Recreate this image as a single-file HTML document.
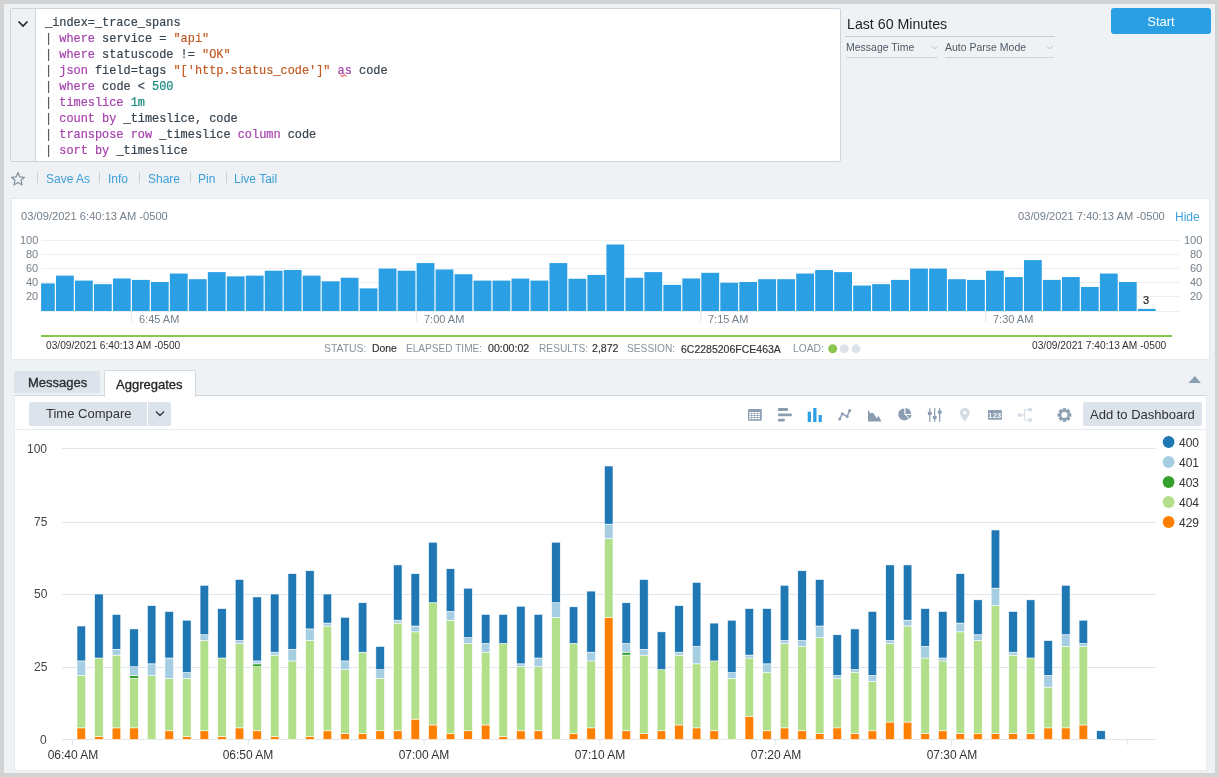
<!DOCTYPE html>
<html><head><meta charset="utf-8"><style>
html,body{margin:0;padding:0;}
body{width:1219px;height:777px;position:relative;overflow:hidden;background:#d3d3d3;font-family:'Liberation Sans', sans-serif;}
.r{position:absolute;}
.t{position:absolute;white-space:nowrap;will-change:transform;}
</style></head><body>
<div class="r" style="left:4px;top:4px;width:1211px;height:769px;background:#eff2f4;"></div>
<div class="r" style="left:10px;top:8px;width:831px;height:154px;background:#fff;border:1px solid #cbd5de;border-radius:2px;box-sizing:border-box;"></div>
<div class="r" style="left:11px;top:9px;width:24px;height:152px;background:#eff2f4;border-right:1px solid #cbd5de;border-radius:2px 0 0 2px;"></div>
<svg class="r" style="left:16px;top:18px" width="14" height="12" viewBox="0 0 14 12"><path d="M2.5 3.5 L7 8 L11.5 3.5" fill="none" stroke="#222" stroke-width="1.6"/></svg>
<div class="t" style="left:45px;top:17.88px;font-size:11.9px;line-height:11.9px;color:#36434f;font-family:'Liberation Mono', monospace;font-weight:normal;white-space:pre;-webkit-text-stroke:0.2px currentColor;">_index=_trace_spans</div>
<div class="t" style="left:45px;top:33.88px;font-size:11.9px;line-height:11.9px;color:#36434f;font-family:'Liberation Mono', monospace;font-weight:normal;white-space:pre;-webkit-text-stroke:0.2px currentColor;"><span style="color:#555">|</span> <span style="color:#a641ad">where</span> service = <span style="color:#c15a23">&quot;api&quot;</span></div>
<div class="t" style="left:45px;top:49.88px;font-size:11.9px;line-height:11.9px;color:#36434f;font-family:'Liberation Mono', monospace;font-weight:normal;white-space:pre;-webkit-text-stroke:0.2px currentColor;"><span style="color:#555">|</span> <span style="color:#a641ad">where</span> statuscode != <span style="color:#c15a23">&quot;OK&quot;</span></div>
<div class="t" style="left:45px;top:65.88px;font-size:11.9px;line-height:11.9px;color:#36434f;font-family:'Liberation Mono', monospace;font-weight:normal;white-space:pre;-webkit-text-stroke:0.2px currentColor;"><span style="color:#555">|</span> <span style="color:#a641ad">json</span> field=tags <span style="color:#c15a23">&quot;[&#39;http.status_code&#39;]&quot;</span> <span style="color:#a641ad">as</span> code</div>
<div class="t" style="left:45px;top:81.88px;font-size:11.9px;line-height:11.9px;color:#36434f;font-family:'Liberation Mono', monospace;font-weight:normal;white-space:pre;-webkit-text-stroke:0.2px currentColor;"><span style="color:#555">|</span> <span style="color:#a641ad">where</span> code &lt; <span style="color:#19897c">500</span></div>
<div class="t" style="left:45px;top:97.88px;font-size:11.9px;line-height:11.9px;color:#36434f;font-family:'Liberation Mono', monospace;font-weight:normal;white-space:pre;-webkit-text-stroke:0.2px currentColor;"><span style="color:#555">|</span> <span style="color:#a641ad">timeslice</span> <span style="color:#19897c">1m</span></div>
<div class="t" style="left:45px;top:113.88px;font-size:11.9px;line-height:11.9px;color:#36434f;font-family:'Liberation Mono', monospace;font-weight:normal;white-space:pre;-webkit-text-stroke:0.2px currentColor;"><span style="color:#555">|</span> <span style="color:#a641ad">count</span> <span style="color:#a641ad">by</span> _timeslice, code</div>
<div class="t" style="left:45px;top:129.88px;font-size:11.9px;line-height:11.9px;color:#36434f;font-family:'Liberation Mono', monospace;font-weight:normal;white-space:pre;-webkit-text-stroke:0.2px currentColor;"><span style="color:#555">|</span> <span style="color:#a641ad">transpose</span> <span style="color:#a641ad">row</span> _timeslice <span style="color:#a641ad">column</span> code</div>
<div class="t" style="left:45px;top:145.88px;font-size:11.9px;line-height:11.9px;color:#36434f;font-family:'Liberation Mono', monospace;font-weight:normal;white-space:pre;-webkit-text-stroke:0.2px currentColor;"><span style="color:#555">|</span> <span style="color:#a641ad">sort</span> <span style="color:#a641ad">by</span> _timeslice</div>
<svg class="r" style="left:0;top:0" width="400" height="100" viewBox="0 0 400 100"><polyline points="340.3,74.6 342.3,76.6 344.3,74.6 346.6,76.6" fill="none" stroke="#ff6a6a" stroke-width="1.1"/></svg>
<svg class="r" style="left:10px;top:171px" width="16" height="16" viewBox="0 0 16 16"><path d="M8 1.6 L9.9 5.9 L14.5 6.3 L11 9.3 L12.1 13.9 L8 11.5 L3.9 13.9 L5 9.3 L1.5 6.3 L6.1 5.9 Z" fill="none" stroke="#8592a0" stroke-width="1.2" stroke-linejoin="round"/></svg>
<div class="r" style="left:37px;top:172px;width:1px;height:11px;background:#c9d1d9;"></div>
<div class="r" style="left:99px;top:172px;width:1px;height:11px;background:#c9d1d9;"></div>
<div class="r" style="left:139px;top:172px;width:1px;height:11px;background:#c9d1d9;"></div>
<div class="r" style="left:190px;top:172px;width:1px;height:11px;background:#c9d1d9;"></div>
<div class="r" style="left:226px;top:172px;width:1px;height:11px;background:#c9d1d9;"></div>
<div class="t" style="left:45.5px;top:173.44px;font-size:12px;line-height:12px;color:#3d9fdc;font-family:'Liberation Sans', sans-serif;font-weight:normal;white-space:pre;">Save As</div>
<div class="t" style="left:107.8px;top:173.44px;font-size:12px;line-height:12px;color:#3d9fdc;font-family:'Liberation Sans', sans-serif;font-weight:normal;white-space:pre;">Info</div>
<div class="t" style="left:147.7px;top:173.44px;font-size:12px;line-height:12px;color:#3d9fdc;font-family:'Liberation Sans', sans-serif;font-weight:normal;white-space:pre;">Share</div>
<div class="t" style="left:198.1px;top:173.44px;font-size:12px;line-height:12px;color:#3d9fdc;font-family:'Liberation Sans', sans-serif;font-weight:normal;white-space:pre;">Pin</div>
<div class="t" style="left:234.3px;top:173.44px;font-size:12px;line-height:12px;color:#3d9fdc;font-family:'Liberation Sans', sans-serif;font-weight:normal;white-space:pre;">Live Tail</div>
<div class="t" style="left:847px;top:17.48px;font-size:14.2px;line-height:14.2px;color:#1e1e1e;font-family:'Liberation Sans', sans-serif;font-weight:normal;">Last 60 Minutes</div>
<div class="r" style="left:845px;top:36px;width:210px;height:1px;background:#c5ced7;"></div>
<div class="t" style="left:846px;top:41.81px;font-size:10.5px;line-height:10.5px;color:#4e5a66;font-family:'Liberation Sans', sans-serif;font-weight:normal;">Message Time</div>
<div class="r" style="left:846px;top:57px;width:92px;height:1px;background:#cbd3db;"></div>
<div class="t" style="left:945px;top:41.81px;font-size:10.5px;line-height:10.5px;color:#4e5a66;font-family:'Liberation Sans', sans-serif;font-weight:normal;">Auto Parse Mode</div>
<div class="r" style="left:945px;top:57px;width:109px;height:1px;background:#cbd3db;"></div>
<svg class="r" style="left:930.5px;top:45px" width="8" height="6" viewBox="0 0 8 6"><path d="M1 1.3 L3.6 3.9 L6.2 1.3" fill="none" stroke="#a6b1bb" stroke-width="0.9"/></svg>
<svg class="r" style="left:1046px;top:45px" width="8" height="6" viewBox="0 0 8 6"><path d="M1 1.3 L3.6 3.9 L6.2 1.3" fill="none" stroke="#a6b1bb" stroke-width="0.9"/></svg>
<div class="r" style="left:1111px;top:8px;width:100px;height:26px;background:#2a9fe4;border-radius:3px;"></div>
<div class="t" style="left:861px;width:600px;text-align:center;top:15.40px;font-size:13px;line-height:13px;color:#fff;font-family:'Liberation Sans', sans-serif;font-weight:normal;">Start</div>
<div class="r" style="left:11px;top:198px;width:1199px;height:162px;background:#fff;border:1px solid #e4e9ed;box-sizing:border-box;"></div>
<div class="t" style="left:20.5px;top:210.56px;font-size:11.15px;line-height:11.15px;color:#737f8a;font-family:'Liberation Sans', sans-serif;font-weight:normal;">03/09/2021 6:40:13 AM -0500</div>
<div class="t" style="right:54px;top:210.56px;font-size:11.15px;line-height:11.15px;color:#737f8a;font-family:'Liberation Sans', sans-serif;font-weight:normal;">03/09/2021 7:40:13 AM -0500</div>
<div class="t" style="left:1175.4px;top:210.84px;font-size:12px;line-height:12px;color:#3d9fdc;font-family:'Liberation Sans', sans-serif;font-weight:normal;">Hide</div>
<svg class="r" style="left:0;top:0" width="1219" height="777" viewBox="0 0 1219 777">
<rect x="41.5" y="240" width="1138.5" height="1" fill="#edf0f3"/>
<rect x="41.5" y="254" width="1138.5" height="1" fill="#edf0f3"/>
<rect x="41.5" y="268" width="1138.5" height="1" fill="#edf0f3"/>
<rect x="41.5" y="282" width="1138.5" height="1" fill="#edf0f3"/>
<rect x="41.5" y="296" width="1138.5" height="1" fill="#edf0f3"/>
<rect x="41.5" y="311" width="1138.5" height="1" fill="#edf0f3"/>
<rect x="41.10" y="283.43" width="13.70" height="27.57" fill="#2a9fe4"/>
<rect x="56.00" y="275.65" width="17.80" height="35.35" fill="#2a9fe4"/>
<rect x="74.98" y="280.60" width="17.80" height="30.40" fill="#2a9fe4"/>
<rect x="93.96" y="284.13" width="17.80" height="26.87" fill="#2a9fe4"/>
<rect x="112.94" y="278.48" width="17.80" height="32.52" fill="#2a9fe4"/>
<rect x="131.92" y="279.89" width="17.80" height="31.11" fill="#2a9fe4"/>
<rect x="150.90" y="282.01" width="17.80" height="28.99" fill="#2a9fe4"/>
<rect x="169.88" y="273.53" width="17.80" height="37.47" fill="#2a9fe4"/>
<rect x="188.86" y="279.19" width="17.80" height="31.81" fill="#2a9fe4"/>
<rect x="207.84" y="272.12" width="17.80" height="38.88" fill="#2a9fe4"/>
<rect x="226.82" y="276.36" width="17.80" height="34.64" fill="#2a9fe4"/>
<rect x="245.80" y="275.65" width="17.80" height="35.35" fill="#2a9fe4"/>
<rect x="264.78" y="270.70" width="17.80" height="40.30" fill="#2a9fe4"/>
<rect x="283.76" y="269.99" width="17.80" height="41.01" fill="#2a9fe4"/>
<rect x="302.74" y="275.65" width="17.80" height="35.35" fill="#2a9fe4"/>
<rect x="321.72" y="281.31" width="17.80" height="29.69" fill="#2a9fe4"/>
<rect x="340.70" y="277.77" width="17.80" height="33.23" fill="#2a9fe4"/>
<rect x="359.68" y="288.38" width="17.80" height="22.62" fill="#2a9fe4"/>
<rect x="378.66" y="268.58" width="17.80" height="42.42" fill="#2a9fe4"/>
<rect x="397.64" y="270.70" width="17.80" height="40.30" fill="#2a9fe4"/>
<rect x="416.62" y="263.07" width="17.80" height="47.93" fill="#2a9fe4"/>
<rect x="435.60" y="269.50" width="17.80" height="41.50" fill="#2a9fe4"/>
<rect x="454.58" y="274.24" width="17.80" height="36.76" fill="#2a9fe4"/>
<rect x="473.56" y="280.60" width="17.80" height="30.40" fill="#2a9fe4"/>
<rect x="492.54" y="280.60" width="17.80" height="30.40" fill="#2a9fe4"/>
<rect x="511.52" y="278.62" width="17.80" height="32.38" fill="#2a9fe4"/>
<rect x="530.50" y="280.60" width="17.80" height="30.40" fill="#2a9fe4"/>
<rect x="549.48" y="263.07" width="17.80" height="47.93" fill="#2a9fe4"/>
<rect x="568.46" y="278.76" width="17.80" height="32.24" fill="#2a9fe4"/>
<rect x="587.44" y="274.94" width="17.80" height="36.06" fill="#2a9fe4"/>
<rect x="606.42" y="244.54" width="17.80" height="66.46" fill="#2a9fe4"/>
<rect x="625.40" y="277.77" width="17.80" height="33.23" fill="#2a9fe4"/>
<rect x="644.38" y="272.12" width="17.80" height="38.88" fill="#2a9fe4"/>
<rect x="663.36" y="284.84" width="17.80" height="26.16" fill="#2a9fe4"/>
<rect x="682.34" y="278.48" width="17.80" height="32.52" fill="#2a9fe4"/>
<rect x="701.32" y="272.82" width="17.80" height="38.18" fill="#2a9fe4"/>
<rect x="720.30" y="282.72" width="17.80" height="28.28" fill="#2a9fe4"/>
<rect x="739.28" y="282.01" width="17.80" height="28.99" fill="#2a9fe4"/>
<rect x="758.26" y="279.19" width="17.80" height="31.81" fill="#2a9fe4"/>
<rect x="777.24" y="279.19" width="17.80" height="31.81" fill="#2a9fe4"/>
<rect x="796.22" y="273.53" width="17.80" height="37.47" fill="#2a9fe4"/>
<rect x="815.20" y="269.99" width="17.80" height="41.01" fill="#2a9fe4"/>
<rect x="834.18" y="272.12" width="17.80" height="38.88" fill="#2a9fe4"/>
<rect x="853.16" y="285.55" width="17.80" height="25.45" fill="#2a9fe4"/>
<rect x="872.14" y="284.13" width="17.80" height="26.87" fill="#2a9fe4"/>
<rect x="891.12" y="279.89" width="17.80" height="31.11" fill="#2a9fe4"/>
<rect x="910.10" y="268.58" width="17.80" height="42.42" fill="#2a9fe4"/>
<rect x="929.08" y="268.58" width="17.80" height="42.42" fill="#2a9fe4"/>
<rect x="948.06" y="279.19" width="17.80" height="31.81" fill="#2a9fe4"/>
<rect x="967.04" y="279.89" width="17.80" height="31.11" fill="#2a9fe4"/>
<rect x="986.02" y="270.70" width="17.80" height="40.30" fill="#2a9fe4"/>
<rect x="1005.00" y="277.06" width="17.80" height="33.94" fill="#2a9fe4"/>
<rect x="1023.98" y="260.10" width="17.80" height="50.90" fill="#2a9fe4"/>
<rect x="1042.96" y="279.89" width="17.80" height="31.11" fill="#2a9fe4"/>
<rect x="1061.94" y="277.06" width="17.80" height="33.94" fill="#2a9fe4"/>
<rect x="1080.92" y="286.96" width="17.80" height="24.04" fill="#2a9fe4"/>
<rect x="1099.90" y="273.53" width="17.80" height="37.47" fill="#2a9fe4"/>
<rect x="1118.88" y="282.01" width="17.80" height="28.99" fill="#2a9fe4"/>
<rect x="1137.86" y="308.88" width="17.80" height="2.12" fill="#2a9fe4"/>
<rect x="130.80" y="311" width="1" height="11" fill="#e3e8ec"/>
<rect x="415.90" y="311" width="1" height="11" fill="#e3e8ec"/>
<rect x="700.30" y="311" width="1" height="11" fill="#e3e8ec"/>
<rect x="985.20" y="311" width="1" height="11" fill="#e3e8ec"/>
<rect x="41" y="335" width="1131" height="2" fill="#84c54a"/>
<circle cx="832.7" cy="348.8" r="4.5" fill="#8cc64f"/>
<circle cx="844.2" cy="348.8" r="4.5" fill="#dde3e8"/>
<circle cx="856" cy="348.8" r="4.5" fill="#dde3e8"/>
</svg>
<div class="t" style="right:1180.7px;top:291.45px;font-size:11px;line-height:11px;color:#737f8a;font-family:'Liberation Sans', sans-serif;font-weight:normal;">20</div>
<div class="t" style="right:17px;top:291.45px;font-size:11px;line-height:11px;color:#737f8a;font-family:'Liberation Sans', sans-serif;font-weight:normal;">20</div>
<div class="t" style="right:1180.7px;top:277.31px;font-size:11px;line-height:11px;color:#737f8a;font-family:'Liberation Sans', sans-serif;font-weight:normal;">40</div>
<div class="t" style="right:17px;top:277.31px;font-size:11px;line-height:11px;color:#737f8a;font-family:'Liberation Sans', sans-serif;font-weight:normal;">40</div>
<div class="t" style="right:1180.7px;top:263.17px;font-size:11px;line-height:11px;color:#737f8a;font-family:'Liberation Sans', sans-serif;font-weight:normal;">60</div>
<div class="t" style="right:17px;top:263.17px;font-size:11px;line-height:11px;color:#737f8a;font-family:'Liberation Sans', sans-serif;font-weight:normal;">60</div>
<div class="t" style="right:1180.7px;top:249.03px;font-size:11px;line-height:11px;color:#737f8a;font-family:'Liberation Sans', sans-serif;font-weight:normal;">80</div>
<div class="t" style="right:17px;top:249.03px;font-size:11px;line-height:11px;color:#737f8a;font-family:'Liberation Sans', sans-serif;font-weight:normal;">80</div>
<div class="t" style="right:1180.7px;top:234.89px;font-size:11px;line-height:11px;color:#737f8a;font-family:'Liberation Sans', sans-serif;font-weight:normal;">100</div>
<div class="t" style="right:17px;top:234.89px;font-size:11px;line-height:11px;color:#737f8a;font-family:'Liberation Sans', sans-serif;font-weight:normal;">100</div>
<div class="t" style="left:846.4000000000001px;width:600px;text-align:center;top:294.69px;font-size:11px;line-height:11px;color:#222;font-family:'Liberation Sans', sans-serif;font-weight:normal;-webkit-text-stroke:0.2px #222;">3</div>
<div class="t" style="left:138.5px;top:313.69px;font-size:11px;line-height:11px;color:#737f8a;font-family:'Liberation Sans', sans-serif;font-weight:normal;">6:45 AM</div>
<div class="t" style="left:423.59999999999997px;top:313.69px;font-size:11px;line-height:11px;color:#737f8a;font-family:'Liberation Sans', sans-serif;font-weight:normal;">7:00 AM</div>
<div class="t" style="left:708.0px;top:313.69px;font-size:11px;line-height:11px;color:#737f8a;font-family:'Liberation Sans', sans-serif;font-weight:normal;">7:15 AM</div>
<div class="t" style="left:992.9000000000001px;top:313.69px;font-size:11px;line-height:11px;color:#737f8a;font-family:'Liberation Sans', sans-serif;font-weight:normal;">7:30 AM</div>
<div class="t" style="left:46.3px;top:341.37px;font-size:10.2px;line-height:10.2px;color:#333;font-family:'Liberation Sans', sans-serif;font-weight:normal;">03/09/2021 6:40:13 AM -0500</div>
<div class="t" style="right:52.5px;top:341.37px;font-size:10.2px;line-height:10.2px;color:#333;font-family:'Liberation Sans', sans-serif;font-weight:normal;">03/09/2021 7:40:13 AM -0500</div>
<div class="t" style="left:323.5px;top:343.60px;font-size:10.4px;line-height:10.4px;color:#87919a;font-family:'Liberation Sans', sans-serif;font-weight:normal;white-space:pre;">STATUS:</div>
<div class="t" style="left:371.5px;top:343.60px;font-size:10.4px;line-height:10.4px;color:#333;font-family:'Liberation Sans', sans-serif;font-weight:normal;white-space:pre;-webkit-text-stroke:0.15px #333;">Done</div>
<div class="t" style="left:406px;top:343.85px;font-size:10.1px;line-height:10.1px;color:#87919a;font-family:'Liberation Sans', sans-serif;font-weight:normal;white-space:pre;">ELAPSED TIME:</div>
<div class="t" style="left:488.4px;top:343.43px;font-size:10.6px;line-height:10.6px;color:#333;font-family:'Liberation Sans', sans-serif;font-weight:normal;white-space:pre;-webkit-text-stroke:0.15px #333;">00:00:02</div>
<div class="t" style="left:538.8px;top:343.77px;font-size:10.2px;line-height:10.2px;color:#87919a;font-family:'Liberation Sans', sans-serif;font-weight:normal;white-space:pre;">RESULTS:</div>
<div class="t" style="left:592px;top:343.43px;font-size:10.6px;line-height:10.6px;color:#333;font-family:'Liberation Sans', sans-serif;font-weight:normal;white-space:pre;-webkit-text-stroke:0.15px #333;">2,872</div>
<div class="t" style="left:627.4px;top:343.77px;font-size:10.2px;line-height:10.2px;color:#87919a;font-family:'Liberation Sans', sans-serif;font-weight:normal;white-space:pre;">SESSION:</div>
<div class="t" style="left:680.8px;top:343.51px;font-size:10.5px;line-height:10.5px;color:#333;font-family:'Liberation Sans', sans-serif;font-weight:normal;white-space:pre;-webkit-text-stroke:0.15px #333;">6C2285206FCE463A</div>
<div class="t" style="left:792.8px;top:343.68px;font-size:10.3px;line-height:10.3px;color:#87919a;font-family:'Liberation Sans', sans-serif;font-weight:normal;white-space:pre;">LOAD:</div>
<div class="r" style="left:14px;top:371px;width:86px;height:22px;background:#dde3ea;border-radius:2px 2px 0 0;"></div>
<div class="t" style="left:27.6px;top:375.90px;font-size:13px;line-height:13px;color:#2b2f33;font-family:'Liberation Sans', sans-serif;font-weight:normal;-webkit-text-stroke:0.35px #2b2f33;">Messages</div>
<div class="r" style="left:14px;top:395px;width:1193px;height:1px;background:#d2d7db;"></div>
<div class="r" style="left:14px;top:396px;width:1193px;height:375px;background:#fff;border:1px solid #e8ecef;border-top:none;box-sizing:border-box;"></div>
<div class="r" style="left:104px;top:370px;width:92px;height:27px;background:#fff;border:1px solid #d3dae0;border-bottom:none;border-radius:2px 2px 0 0;box-sizing:border-box;"></div>
<div class="t" style="left:115.9px;top:377.60px;font-size:13px;line-height:13px;color:#222;font-family:'Liberation Sans', sans-serif;font-weight:normal;-webkit-text-stroke:0.3px #222;">Aggregates</div>
<svg class="r" style="left:1186px;top:374px" width="17" height="11" viewBox="0 0 17 11"><path d="M2.5 9 L8.8 2 L15 9 Z" fill="#8a9eb0"/></svg>
<div class="r" style="left:29px;top:402px;width:118px;height:24px;background:#dde3ea;border-radius:2px 0 0 2px;"></div>
<div class="r" style="left:148px;top:402px;width:23px;height:24px;background:#dde3ea;border-radius:0 2px 2px 0;"></div>
<div class="t" style="left:46.2px;top:407.00px;font-size:13px;line-height:13px;color:#333;font-family:'Liberation Sans', sans-serif;font-weight:normal;">Time Compare</div>
<svg class="r" style="left:154px;top:409px" width="12" height="9" viewBox="0 0 12 9"><path d="M2 2.5 L6 6.5 L10 2.5" fill="none" stroke="#2f3942" stroke-width="1.4"/></svg>
<div class="r" style="left:15px;top:429px;width:1191px;height:1px;background:#e6ebef;"></div>
<div class="r" style="left:1083px;top:402px;width:119px;height:24px;background:#dde3ea;border-radius:2px;"></div>
<div class="t" style="left:1090px;top:407.70px;font-size:13px;line-height:13px;color:#333;font-family:'Liberation Sans', sans-serif;font-weight:normal;">Add to Dashboard</div>
<svg class="r" style="left:0;top:0" width="1219" height="777" viewBox="0 0 1219 777">
<rect x="748" y="409.1" width="13.8" height="11.7" rx="1" fill="#8a9db1"/>
<rect x="749.1" y="412.0" width="2.4" height="1.3" fill="#fff"/>
<rect x="752.0" y="412.0" width="2.4" height="1.3" fill="#fff"/>
<rect x="754.8" y="412.0" width="2.4" height="1.3" fill="#fff"/>
<rect x="757.7" y="412.0" width="2.4" height="1.3" fill="#fff"/>
<rect x="749.1" y="413.9" width="2.4" height="1.3" fill="#fff"/>
<rect x="752.0" y="413.9" width="2.4" height="1.3" fill="#fff"/>
<rect x="754.8" y="413.9" width="2.4" height="1.3" fill="#fff"/>
<rect x="757.7" y="413.9" width="2.4" height="1.3" fill="#fff"/>
<rect x="749.1" y="415.9" width="2.4" height="1.3" fill="#fff"/>
<rect x="752.0" y="415.9" width="2.4" height="1.3" fill="#fff"/>
<rect x="754.8" y="415.9" width="2.4" height="1.3" fill="#fff"/>
<rect x="757.7" y="415.9" width="2.4" height="1.3" fill="#fff"/>
<rect x="749.1" y="417.9" width="2.4" height="1.3" fill="#fff"/>
<rect x="752.0" y="417.9" width="2.4" height="1.3" fill="#fff"/>
<rect x="754.8" y="417.9" width="2.4" height="1.3" fill="#fff"/>
<rect x="757.7" y="417.9" width="2.4" height="1.3" fill="#fff"/>
<rect x="778" y="408.1" width="10" height="2.9" rx="0.8" fill="#8a9db1"/>
<rect x="778" y="413.4" width="13.8" height="2.9" rx="0.8" fill="#8a9db1"/>
<rect x="778" y="418.7" width="6.8" height="2.9" rx="0.8" fill="#8a9db1"/>
<rect x="807.7" y="411.7" width="3.3" height="10.3" fill="#2d9fe3"/>
<rect x="813.2" y="408" width="3.3" height="14" fill="#2d9fe3"/>
<rect x="818.6" y="415" width="3.2" height="7" fill="#2d9fe3"/>
<polyline points="839.7,419.0 842.2,413.8 847.1,416.6 849.7,410.6" fill="none" stroke="#8a9db1" stroke-width="1.4"/>
<circle cx="839.7" cy="419.0" r="1.5" fill="#8a9db1"/>
<circle cx="842.2" cy="413.8" r="1.5" fill="#8a9db1"/>
<circle cx="847.1" cy="416.6" r="1.5" fill="#8a9db1"/>
<circle cx="849.7" cy="410.6" r="1.5" fill="#8a9db1"/>
<path d="M868 409.5 L870.4 413.4 L871.6 412.7 L873.2 413 L876.7 418.3 L878.5 415.9 L881.6 421.6 L868 421.6 Z" fill="#8a9db1"/>
<path d="M904.3 414.3 L904.3 408.4 A6 6 0 1 0 908.7 418.5 Z" fill="#8a9db1"/>
<path d="M905.5 413.9 L905.5 408.1 A5.6 5.6 0 0 1 911.1 413.9 Z" fill="#8a9db1"/>
<path d="M906.6 415.1 L911.6 415.1 A5.8 5.8 0 0 1 909.5 418.6 Z" fill="#8a9db1"/>
<rect x="929.1999999999999" y="408.1" width="1.2" height="13.8" fill="#8a9db1"/>
<rect x="927.9" y="411.7" width="3.8" height="3.2" rx="0.5" fill="#8a9db1"/>
<rect x="934.1" y="408.1" width="1.2" height="13.8" fill="#8a9db1"/>
<rect x="932.8000000000001" y="415.9" width="3.8" height="3.2" rx="0.5" fill="#8a9db1"/>
<rect x="939.1" y="408.1" width="1.2" height="13.8" fill="#8a9db1"/>
<rect x="937.8000000000001" y="410.59999999999997" width="3.8" height="3.2" rx="0.5" fill="#8a9db1"/>
<path d="M964.8 407.9 A4.8 4.8 0 0 1 969.6 412.7 C969.6 415.4 966.4 418.8 964.8 421.7 C963.2 418.8 960 415.4 960 412.7 A4.8 4.8 0 0 1 964.8 407.9 Z M964.8 411 A1.7 1.7 0 1 0 964.8 414.4 A1.7 1.7 0 1 0 964.8 411 Z" fill="#d3dbe3" fill-rule="evenodd"/>
<rect x="988" y="410.1" width="13.8" height="9.6" fill="#8a9db1"/>
<text x="994.9" y="417.7" font-family="Liberation Sans" font-weight="bold" font-size="7.4" fill="#fff" text-anchor="middle" letter-spacing="0.3">123</text>
<rect x="1018" y="413.4" width="3.8" height="3.4" fill="#d3dbe3"/>
<rect x="1028.3" y="408" width="3.5" height="3.4" fill="#d3dbe3"/>
<rect x="1028.3" y="418.3" width="3.5" height="3.4" fill="#d3dbe3"/>
<path d="M1021.8 415.1 H1024.4 M1024.4 409.7 V420 M1024.4 409.7 H1028.3 M1024.4 420 H1028.3" stroke="#d3dbe3" stroke-width="1" fill="none"/>
<path d="M1069.27 413.25 L1071.18 413.39 L1071.18 416.41 L1069.27 416.55 L1069.03 417.14 L1070.28 418.60 L1068.15 420.73 L1066.69 419.48 L1066.10 419.72 L1065.96 421.63 L1062.94 421.63 L1062.80 419.72 L1062.21 419.48 L1060.75 420.73 L1058.62 418.60 L1059.87 417.14 L1059.63 416.55 L1057.72 416.41 L1057.72 413.39 L1059.63 413.25 L1059.87 412.66 L1058.62 411.20 L1060.75 409.07 L1062.21 410.32 L1062.80 410.08 L1062.94 408.17 L1065.96 408.17 L1066.10 410.08 L1066.69 410.32 L1068.15 409.07 L1070.28 411.20 L1069.03 412.66 Z M1067.65 414.90 A3.2 3.2 0 1 0 1061.25 414.90 A3.2 3.2 0 1 0 1067.65 414.90 Z" fill="#8a9db1" fill-rule="evenodd" stroke="#8a9db1" stroke-width="0.3" stroke-linejoin="round"/>
</svg>
<svg class="r" style="left:0;top:0" width="1219" height="777" viewBox="0 0 1219 777">
<rect x="62" y="448" width="1094" height="1" fill="#e0e6eb"/>
<rect x="62" y="522" width="1094" height="1" fill="#e0e6eb"/>
<rect x="62" y="594" width="1094" height="1" fill="#e0e6eb"/>
<rect x="62" y="667" width="1094" height="1" fill="#e0e6eb"/>
<rect x="62" y="739" width="1094" height="1" fill="#e0e6eb"/>
<rect x="72.00" y="739" width="1" height="6" fill="#dfe6ec"/>
<rect x="247.80" y="739" width="1" height="6" fill="#dfe6ec"/>
<rect x="423.60" y="739" width="1" height="6" fill="#dfe6ec"/>
<rect x="599.40" y="739" width="1" height="6" fill="#dfe6ec"/>
<rect x="775.20" y="739" width="1" height="6" fill="#dfe6ec"/>
<rect x="951.00" y="739" width="1" height="6" fill="#dfe6ec"/>
<rect x="1126.80" y="739" width="1" height="6" fill="#dfe6ec"/>
<rect x="77.00" y="727.86" width="8.6" height="11.64" fill="#ff7f00" stroke="#fff" stroke-width="0.6"/>
<rect x="77.00" y="675.48" width="8.6" height="52.38" fill="#b2df8a" stroke="#fff" stroke-width="0.6"/>
<rect x="77.00" y="660.93" width="8.6" height="14.55" fill="#a6cee3" stroke="#fff" stroke-width="0.6"/>
<rect x="77.00" y="626.01" width="8.6" height="34.92" fill="#1f78b4" stroke="#fff" stroke-width="0.6"/>
<rect x="94.58" y="736.59" width="8.6" height="2.91" fill="#ff7f00" stroke="#fff" stroke-width="0.6"/>
<rect x="94.58" y="658.02" width="8.6" height="78.57" fill="#b2df8a" stroke="#fff" stroke-width="0.6"/>
<rect x="94.58" y="594.00" width="8.6" height="64.02" fill="#1f78b4" stroke="#fff" stroke-width="0.6"/>
<rect x="112.16" y="727.86" width="8.6" height="11.64" fill="#ff7f00" stroke="#fff" stroke-width="0.6"/>
<rect x="112.16" y="655.11" width="8.6" height="72.75" fill="#b2df8a" stroke="#fff" stroke-width="0.6"/>
<rect x="112.16" y="649.29" width="8.6" height="5.82" fill="#a6cee3" stroke="#fff" stroke-width="0.6"/>
<rect x="112.16" y="614.37" width="8.6" height="34.92" fill="#1f78b4" stroke="#fff" stroke-width="0.6"/>
<rect x="129.74" y="727.86" width="8.6" height="11.64" fill="#ff7f00" stroke="#fff" stroke-width="0.6"/>
<rect x="129.74" y="678.39" width="8.6" height="49.47" fill="#b2df8a" stroke="#fff" stroke-width="0.6"/>
<rect x="129.74" y="675.48" width="8.6" height="2.91" fill="#33a02c" stroke="#fff" stroke-width="0.6"/>
<rect x="129.74" y="666.75" width="8.6" height="8.73" fill="#a6cee3" stroke="#fff" stroke-width="0.6"/>
<rect x="129.74" y="628.92" width="8.6" height="37.83" fill="#1f78b4" stroke="#fff" stroke-width="0.6"/>
<rect x="147.32" y="675.48" width="8.6" height="64.02" fill="#b2df8a" stroke="#fff" stroke-width="0.6"/>
<rect x="147.32" y="663.84" width="8.6" height="11.64" fill="#a6cee3" stroke="#fff" stroke-width="0.6"/>
<rect x="147.32" y="605.64" width="8.6" height="58.20" fill="#1f78b4" stroke="#fff" stroke-width="0.6"/>
<rect x="164.90" y="730.77" width="8.6" height="8.73" fill="#ff7f00" stroke="#fff" stroke-width="0.6"/>
<rect x="164.90" y="678.39" width="8.6" height="52.38" fill="#b2df8a" stroke="#fff" stroke-width="0.6"/>
<rect x="164.90" y="658.02" width="8.6" height="20.37" fill="#a6cee3" stroke="#fff" stroke-width="0.6"/>
<rect x="164.90" y="611.46" width="8.6" height="46.56" fill="#1f78b4" stroke="#fff" stroke-width="0.6"/>
<rect x="182.48" y="736.59" width="8.6" height="2.91" fill="#ff7f00" stroke="#fff" stroke-width="0.6"/>
<rect x="182.48" y="678.39" width="8.6" height="58.20" fill="#b2df8a" stroke="#fff" stroke-width="0.6"/>
<rect x="182.48" y="672.57" width="8.6" height="5.82" fill="#a6cee3" stroke="#fff" stroke-width="0.6"/>
<rect x="182.48" y="620.19" width="8.6" height="52.38" fill="#1f78b4" stroke="#fff" stroke-width="0.6"/>
<rect x="200.06" y="730.77" width="8.6" height="8.73" fill="#ff7f00" stroke="#fff" stroke-width="0.6"/>
<rect x="200.06" y="640.56" width="8.6" height="90.21" fill="#b2df8a" stroke="#fff" stroke-width="0.6"/>
<rect x="200.06" y="634.74" width="8.6" height="5.82" fill="#a6cee3" stroke="#fff" stroke-width="0.6"/>
<rect x="200.06" y="585.27" width="8.6" height="49.47" fill="#1f78b4" stroke="#fff" stroke-width="0.6"/>
<rect x="217.64" y="736.59" width="8.6" height="2.91" fill="#ff7f00" stroke="#fff" stroke-width="0.6"/>
<rect x="217.64" y="658.02" width="8.6" height="78.57" fill="#b2df8a" stroke="#fff" stroke-width="0.6"/>
<rect x="217.64" y="608.55" width="8.6" height="49.47" fill="#1f78b4" stroke="#fff" stroke-width="0.6"/>
<rect x="235.22" y="727.86" width="8.6" height="11.64" fill="#ff7f00" stroke="#fff" stroke-width="0.6"/>
<rect x="235.22" y="643.47" width="8.6" height="84.39" fill="#b2df8a" stroke="#fff" stroke-width="0.6"/>
<rect x="235.22" y="640.56" width="8.6" height="2.91" fill="#a6cee3" stroke="#fff" stroke-width="0.6"/>
<rect x="235.22" y="579.45" width="8.6" height="61.11" fill="#1f78b4" stroke="#fff" stroke-width="0.6"/>
<rect x="252.80" y="730.77" width="8.6" height="8.73" fill="#ff7f00" stroke="#fff" stroke-width="0.6"/>
<rect x="252.80" y="666.75" width="8.6" height="64.02" fill="#b2df8a" stroke="#fff" stroke-width="0.6"/>
<rect x="252.80" y="663.84" width="8.6" height="2.91" fill="#33a02c" stroke="#fff" stroke-width="0.6"/>
<rect x="252.80" y="660.93" width="8.6" height="2.91" fill="#a6cee3" stroke="#fff" stroke-width="0.6"/>
<rect x="252.80" y="596.91" width="8.6" height="64.02" fill="#1f78b4" stroke="#fff" stroke-width="0.6"/>
<rect x="270.38" y="736.59" width="8.6" height="2.91" fill="#ff7f00" stroke="#fff" stroke-width="0.6"/>
<rect x="270.38" y="655.11" width="8.6" height="81.48" fill="#b2df8a" stroke="#fff" stroke-width="0.6"/>
<rect x="270.38" y="652.20" width="8.6" height="2.91" fill="#a6cee3" stroke="#fff" stroke-width="0.6"/>
<rect x="270.38" y="594.00" width="8.6" height="58.20" fill="#1f78b4" stroke="#fff" stroke-width="0.6"/>
<rect x="287.96" y="660.93" width="8.6" height="78.57" fill="#b2df8a" stroke="#fff" stroke-width="0.6"/>
<rect x="287.96" y="649.29" width="8.6" height="11.64" fill="#a6cee3" stroke="#fff" stroke-width="0.6"/>
<rect x="287.96" y="573.63" width="8.6" height="75.66" fill="#1f78b4" stroke="#fff" stroke-width="0.6"/>
<rect x="305.54" y="736.59" width="8.6" height="2.91" fill="#ff7f00" stroke="#fff" stroke-width="0.6"/>
<rect x="305.54" y="640.56" width="8.6" height="96.03" fill="#b2df8a" stroke="#fff" stroke-width="0.6"/>
<rect x="305.54" y="628.92" width="8.6" height="11.64" fill="#a6cee3" stroke="#fff" stroke-width="0.6"/>
<rect x="305.54" y="570.72" width="8.6" height="58.20" fill="#1f78b4" stroke="#fff" stroke-width="0.6"/>
<rect x="323.12" y="730.77" width="8.6" height="8.73" fill="#ff7f00" stroke="#fff" stroke-width="0.6"/>
<rect x="323.12" y="626.01" width="8.6" height="104.76" fill="#b2df8a" stroke="#fff" stroke-width="0.6"/>
<rect x="323.12" y="623.10" width="8.6" height="2.91" fill="#a6cee3" stroke="#fff" stroke-width="0.6"/>
<rect x="323.12" y="594.00" width="8.6" height="29.10" fill="#1f78b4" stroke="#fff" stroke-width="0.6"/>
<rect x="340.70" y="733.68" width="8.6" height="5.82" fill="#ff7f00" stroke="#fff" stroke-width="0.6"/>
<rect x="340.70" y="669.66" width="8.6" height="64.02" fill="#b2df8a" stroke="#fff" stroke-width="0.6"/>
<rect x="340.70" y="660.93" width="8.6" height="8.73" fill="#a6cee3" stroke="#fff" stroke-width="0.6"/>
<rect x="340.70" y="617.28" width="8.6" height="43.65" fill="#1f78b4" stroke="#fff" stroke-width="0.6"/>
<rect x="358.28" y="733.68" width="8.6" height="5.82" fill="#ff7f00" stroke="#fff" stroke-width="0.6"/>
<rect x="358.28" y="652.20" width="8.6" height="81.48" fill="#b2df8a" stroke="#fff" stroke-width="0.6"/>
<rect x="358.28" y="602.73" width="8.6" height="49.47" fill="#1f78b4" stroke="#fff" stroke-width="0.6"/>
<rect x="375.86" y="730.77" width="8.6" height="8.73" fill="#ff7f00" stroke="#fff" stroke-width="0.6"/>
<rect x="375.86" y="678.39" width="8.6" height="52.38" fill="#b2df8a" stroke="#fff" stroke-width="0.6"/>
<rect x="375.86" y="669.66" width="8.6" height="8.73" fill="#a6cee3" stroke="#fff" stroke-width="0.6"/>
<rect x="375.86" y="646.38" width="8.6" height="23.28" fill="#1f78b4" stroke="#fff" stroke-width="0.6"/>
<rect x="393.44" y="730.77" width="8.6" height="8.73" fill="#ff7f00" stroke="#fff" stroke-width="0.6"/>
<rect x="393.44" y="623.10" width="8.6" height="107.67" fill="#b2df8a" stroke="#fff" stroke-width="0.6"/>
<rect x="393.44" y="620.19" width="8.6" height="2.91" fill="#a6cee3" stroke="#fff" stroke-width="0.6"/>
<rect x="393.44" y="564.90" width="8.6" height="55.29" fill="#1f78b4" stroke="#fff" stroke-width="0.6"/>
<rect x="411.02" y="719.13" width="8.6" height="20.37" fill="#ff7f00" stroke="#fff" stroke-width="0.6"/>
<rect x="411.02" y="631.83" width="8.6" height="87.30" fill="#b2df8a" stroke="#fff" stroke-width="0.6"/>
<rect x="411.02" y="626.01" width="8.6" height="5.82" fill="#a6cee3" stroke="#fff" stroke-width="0.6"/>
<rect x="411.02" y="573.63" width="8.6" height="52.38" fill="#1f78b4" stroke="#fff" stroke-width="0.6"/>
<rect x="428.60" y="724.95" width="8.6" height="14.55" fill="#ff7f00" stroke="#fff" stroke-width="0.6"/>
<rect x="428.60" y="602.73" width="8.6" height="122.22" fill="#b2df8a" stroke="#fff" stroke-width="0.6"/>
<rect x="428.60" y="542.20" width="8.6" height="60.53" fill="#1f78b4" stroke="#fff" stroke-width="0.6"/>
<rect x="446.18" y="733.68" width="8.6" height="5.82" fill="#ff7f00" stroke="#fff" stroke-width="0.6"/>
<rect x="446.18" y="620.19" width="8.6" height="113.49" fill="#b2df8a" stroke="#fff" stroke-width="0.6"/>
<rect x="446.18" y="611.46" width="8.6" height="8.73" fill="#a6cee3" stroke="#fff" stroke-width="0.6"/>
<rect x="446.18" y="568.68" width="8.6" height="42.78" fill="#1f78b4" stroke="#fff" stroke-width="0.6"/>
<rect x="463.76" y="730.77" width="8.6" height="8.73" fill="#ff7f00" stroke="#fff" stroke-width="0.6"/>
<rect x="463.76" y="643.47" width="8.6" height="87.30" fill="#b2df8a" stroke="#fff" stroke-width="0.6"/>
<rect x="463.76" y="637.65" width="8.6" height="5.82" fill="#a6cee3" stroke="#fff" stroke-width="0.6"/>
<rect x="463.76" y="588.18" width="8.6" height="49.47" fill="#1f78b4" stroke="#fff" stroke-width="0.6"/>
<rect x="481.34" y="724.95" width="8.6" height="14.55" fill="#ff7f00" stroke="#fff" stroke-width="0.6"/>
<rect x="481.34" y="652.20" width="8.6" height="72.75" fill="#b2df8a" stroke="#fff" stroke-width="0.6"/>
<rect x="481.34" y="643.47" width="8.6" height="8.73" fill="#a6cee3" stroke="#fff" stroke-width="0.6"/>
<rect x="481.34" y="614.37" width="8.6" height="29.10" fill="#1f78b4" stroke="#fff" stroke-width="0.6"/>
<rect x="498.92" y="736.59" width="8.6" height="2.91" fill="#ff7f00" stroke="#fff" stroke-width="0.6"/>
<rect x="498.92" y="643.47" width="8.6" height="93.12" fill="#b2df8a" stroke="#fff" stroke-width="0.6"/>
<rect x="498.92" y="614.37" width="8.6" height="29.10" fill="#1f78b4" stroke="#fff" stroke-width="0.6"/>
<rect x="516.50" y="730.77" width="8.6" height="8.73" fill="#ff7f00" stroke="#fff" stroke-width="0.6"/>
<rect x="516.50" y="666.75" width="8.6" height="64.02" fill="#b2df8a" stroke="#fff" stroke-width="0.6"/>
<rect x="516.50" y="663.84" width="8.6" height="2.91" fill="#a6cee3" stroke="#fff" stroke-width="0.6"/>
<rect x="516.50" y="606.22" width="8.6" height="57.62" fill="#1f78b4" stroke="#fff" stroke-width="0.6"/>
<rect x="534.08" y="730.77" width="8.6" height="8.73" fill="#ff7f00" stroke="#fff" stroke-width="0.6"/>
<rect x="534.08" y="666.75" width="8.6" height="64.02" fill="#b2df8a" stroke="#fff" stroke-width="0.6"/>
<rect x="534.08" y="658.02" width="8.6" height="8.73" fill="#a6cee3" stroke="#fff" stroke-width="0.6"/>
<rect x="534.08" y="614.37" width="8.6" height="43.65" fill="#1f78b4" stroke="#fff" stroke-width="0.6"/>
<rect x="551.66" y="617.28" width="8.6" height="122.22" fill="#b2df8a" stroke="#fff" stroke-width="0.6"/>
<rect x="551.66" y="602.73" width="8.6" height="14.55" fill="#a6cee3" stroke="#fff" stroke-width="0.6"/>
<rect x="551.66" y="542.20" width="8.6" height="60.53" fill="#1f78b4" stroke="#fff" stroke-width="0.6"/>
<rect x="569.24" y="733.68" width="8.6" height="5.82" fill="#ff7f00" stroke="#fff" stroke-width="0.6"/>
<rect x="569.24" y="643.47" width="8.6" height="90.21" fill="#b2df8a" stroke="#fff" stroke-width="0.6"/>
<rect x="569.24" y="606.80" width="8.6" height="36.67" fill="#1f78b4" stroke="#fff" stroke-width="0.6"/>
<rect x="586.82" y="727.86" width="8.6" height="11.64" fill="#ff7f00" stroke="#fff" stroke-width="0.6"/>
<rect x="586.82" y="660.93" width="8.6" height="66.93" fill="#b2df8a" stroke="#fff" stroke-width="0.6"/>
<rect x="586.82" y="652.20" width="8.6" height="8.73" fill="#a6cee3" stroke="#fff" stroke-width="0.6"/>
<rect x="586.82" y="591.09" width="8.6" height="61.11" fill="#1f78b4" stroke="#fff" stroke-width="0.6"/>
<rect x="604.40" y="617.28" width="8.6" height="122.22" fill="#ff7f00" stroke="#fff" stroke-width="0.6"/>
<rect x="604.40" y="538.71" width="8.6" height="78.57" fill="#b2df8a" stroke="#fff" stroke-width="0.6"/>
<rect x="604.40" y="524.16" width="8.6" height="14.55" fill="#a6cee3" stroke="#fff" stroke-width="0.6"/>
<rect x="604.40" y="465.96" width="8.6" height="58.20" fill="#1f78b4" stroke="#fff" stroke-width="0.6"/>
<rect x="621.98" y="730.77" width="8.6" height="8.73" fill="#ff7f00" stroke="#fff" stroke-width="0.6"/>
<rect x="621.98" y="655.11" width="8.6" height="75.66" fill="#b2df8a" stroke="#fff" stroke-width="0.6"/>
<rect x="621.98" y="652.20" width="8.6" height="2.91" fill="#33a02c" stroke="#fff" stroke-width="0.6"/>
<rect x="621.98" y="643.47" width="8.6" height="8.73" fill="#a6cee3" stroke="#fff" stroke-width="0.6"/>
<rect x="621.98" y="602.73" width="8.6" height="40.74" fill="#1f78b4" stroke="#fff" stroke-width="0.6"/>
<rect x="639.56" y="733.68" width="8.6" height="5.82" fill="#ff7f00" stroke="#fff" stroke-width="0.6"/>
<rect x="639.56" y="655.11" width="8.6" height="78.57" fill="#b2df8a" stroke="#fff" stroke-width="0.6"/>
<rect x="639.56" y="649.29" width="8.6" height="5.82" fill="#a6cee3" stroke="#fff" stroke-width="0.6"/>
<rect x="639.56" y="579.45" width="8.6" height="69.84" fill="#1f78b4" stroke="#fff" stroke-width="0.6"/>
<rect x="657.14" y="730.77" width="8.6" height="8.73" fill="#ff7f00" stroke="#fff" stroke-width="0.6"/>
<rect x="657.14" y="669.66" width="8.6" height="61.11" fill="#b2df8a" stroke="#fff" stroke-width="0.6"/>
<rect x="657.14" y="631.83" width="8.6" height="37.83" fill="#1f78b4" stroke="#fff" stroke-width="0.6"/>
<rect x="674.72" y="724.95" width="8.6" height="14.55" fill="#ff7f00" stroke="#fff" stroke-width="0.6"/>
<rect x="674.72" y="655.11" width="8.6" height="69.84" fill="#b2df8a" stroke="#fff" stroke-width="0.6"/>
<rect x="674.72" y="652.20" width="8.6" height="2.91" fill="#a6cee3" stroke="#fff" stroke-width="0.6"/>
<rect x="674.72" y="605.64" width="8.6" height="46.56" fill="#1f78b4" stroke="#fff" stroke-width="0.6"/>
<rect x="692.30" y="727.86" width="8.6" height="11.64" fill="#ff7f00" stroke="#fff" stroke-width="0.6"/>
<rect x="692.30" y="663.84" width="8.6" height="64.02" fill="#b2df8a" stroke="#fff" stroke-width="0.6"/>
<rect x="692.30" y="646.38" width="8.6" height="17.46" fill="#a6cee3" stroke="#fff" stroke-width="0.6"/>
<rect x="692.30" y="582.36" width="8.6" height="64.02" fill="#1f78b4" stroke="#fff" stroke-width="0.6"/>
<rect x="709.88" y="730.77" width="8.6" height="8.73" fill="#ff7f00" stroke="#fff" stroke-width="0.6"/>
<rect x="709.88" y="660.93" width="8.6" height="69.84" fill="#b2df8a" stroke="#fff" stroke-width="0.6"/>
<rect x="709.88" y="623.10" width="8.6" height="37.83" fill="#1f78b4" stroke="#fff" stroke-width="0.6"/>
<rect x="727.46" y="678.39" width="8.6" height="61.11" fill="#b2df8a" stroke="#fff" stroke-width="0.6"/>
<rect x="727.46" y="672.57" width="8.6" height="5.82" fill="#a6cee3" stroke="#fff" stroke-width="0.6"/>
<rect x="727.46" y="620.19" width="8.6" height="52.38" fill="#1f78b4" stroke="#fff" stroke-width="0.6"/>
<rect x="745.04" y="716.22" width="8.6" height="23.28" fill="#ff7f00" stroke="#fff" stroke-width="0.6"/>
<rect x="745.04" y="658.02" width="8.6" height="58.20" fill="#b2df8a" stroke="#fff" stroke-width="0.6"/>
<rect x="745.04" y="655.11" width="8.6" height="2.91" fill="#a6cee3" stroke="#fff" stroke-width="0.6"/>
<rect x="745.04" y="608.55" width="8.6" height="46.56" fill="#1f78b4" stroke="#fff" stroke-width="0.6"/>
<rect x="762.62" y="730.77" width="8.6" height="8.73" fill="#ff7f00" stroke="#fff" stroke-width="0.6"/>
<rect x="762.62" y="672.57" width="8.6" height="58.20" fill="#b2df8a" stroke="#fff" stroke-width="0.6"/>
<rect x="762.62" y="663.84" width="8.6" height="8.73" fill="#a6cee3" stroke="#fff" stroke-width="0.6"/>
<rect x="762.62" y="608.55" width="8.6" height="55.29" fill="#1f78b4" stroke="#fff" stroke-width="0.6"/>
<rect x="780.20" y="727.86" width="8.6" height="11.64" fill="#ff7f00" stroke="#fff" stroke-width="0.6"/>
<rect x="780.20" y="643.47" width="8.6" height="84.39" fill="#b2df8a" stroke="#fff" stroke-width="0.6"/>
<rect x="780.20" y="640.56" width="8.6" height="2.91" fill="#a6cee3" stroke="#fff" stroke-width="0.6"/>
<rect x="780.20" y="585.27" width="8.6" height="55.29" fill="#1f78b4" stroke="#fff" stroke-width="0.6"/>
<rect x="797.78" y="730.77" width="8.6" height="8.73" fill="#ff7f00" stroke="#fff" stroke-width="0.6"/>
<rect x="797.78" y="646.38" width="8.6" height="84.39" fill="#b2df8a" stroke="#fff" stroke-width="0.6"/>
<rect x="797.78" y="640.56" width="8.6" height="5.82" fill="#a6cee3" stroke="#fff" stroke-width="0.6"/>
<rect x="797.78" y="570.72" width="8.6" height="69.84" fill="#1f78b4" stroke="#fff" stroke-width="0.6"/>
<rect x="815.36" y="733.68" width="8.6" height="5.82" fill="#ff7f00" stroke="#fff" stroke-width="0.6"/>
<rect x="815.36" y="637.65" width="8.6" height="96.03" fill="#b2df8a" stroke="#fff" stroke-width="0.6"/>
<rect x="815.36" y="626.01" width="8.6" height="11.64" fill="#a6cee3" stroke="#fff" stroke-width="0.6"/>
<rect x="815.36" y="579.45" width="8.6" height="46.56" fill="#1f78b4" stroke="#fff" stroke-width="0.6"/>
<rect x="832.94" y="727.86" width="8.6" height="11.64" fill="#ff7f00" stroke="#fff" stroke-width="0.6"/>
<rect x="832.94" y="678.39" width="8.6" height="49.47" fill="#b2df8a" stroke="#fff" stroke-width="0.6"/>
<rect x="832.94" y="675.48" width="8.6" height="2.91" fill="#a6cee3" stroke="#fff" stroke-width="0.6"/>
<rect x="832.94" y="634.74" width="8.6" height="40.74" fill="#1f78b4" stroke="#fff" stroke-width="0.6"/>
<rect x="850.52" y="733.68" width="8.6" height="5.82" fill="#ff7f00" stroke="#fff" stroke-width="0.6"/>
<rect x="850.52" y="672.57" width="8.6" height="61.11" fill="#b2df8a" stroke="#fff" stroke-width="0.6"/>
<rect x="850.52" y="669.66" width="8.6" height="2.91" fill="#a6cee3" stroke="#fff" stroke-width="0.6"/>
<rect x="850.52" y="628.92" width="8.6" height="40.74" fill="#1f78b4" stroke="#fff" stroke-width="0.6"/>
<rect x="868.10" y="730.77" width="8.6" height="8.73" fill="#ff7f00" stroke="#fff" stroke-width="0.6"/>
<rect x="868.10" y="681.30" width="8.6" height="49.47" fill="#b2df8a" stroke="#fff" stroke-width="0.6"/>
<rect x="868.10" y="675.48" width="8.6" height="5.82" fill="#a6cee3" stroke="#fff" stroke-width="0.6"/>
<rect x="868.10" y="611.46" width="8.6" height="64.02" fill="#1f78b4" stroke="#fff" stroke-width="0.6"/>
<rect x="885.68" y="722.04" width="8.6" height="17.46" fill="#ff7f00" stroke="#fff" stroke-width="0.6"/>
<rect x="885.68" y="643.47" width="8.6" height="78.57" fill="#b2df8a" stroke="#fff" stroke-width="0.6"/>
<rect x="885.68" y="640.56" width="8.6" height="2.91" fill="#a6cee3" stroke="#fff" stroke-width="0.6"/>
<rect x="885.68" y="564.90" width="8.6" height="75.66" fill="#1f78b4" stroke="#fff" stroke-width="0.6"/>
<rect x="903.26" y="722.04" width="8.6" height="17.46" fill="#ff7f00" stroke="#fff" stroke-width="0.6"/>
<rect x="903.26" y="626.01" width="8.6" height="96.03" fill="#b2df8a" stroke="#fff" stroke-width="0.6"/>
<rect x="903.26" y="620.19" width="8.6" height="5.82" fill="#a6cee3" stroke="#fff" stroke-width="0.6"/>
<rect x="903.26" y="564.90" width="8.6" height="55.29" fill="#1f78b4" stroke="#fff" stroke-width="0.6"/>
<rect x="920.84" y="733.68" width="8.6" height="5.82" fill="#ff7f00" stroke="#fff" stroke-width="0.6"/>
<rect x="920.84" y="658.02" width="8.6" height="75.66" fill="#b2df8a" stroke="#fff" stroke-width="0.6"/>
<rect x="920.84" y="646.38" width="8.6" height="11.64" fill="#a6cee3" stroke="#fff" stroke-width="0.6"/>
<rect x="920.84" y="608.55" width="8.6" height="37.83" fill="#1f78b4" stroke="#fff" stroke-width="0.6"/>
<rect x="938.42" y="730.77" width="8.6" height="8.73" fill="#ff7f00" stroke="#fff" stroke-width="0.6"/>
<rect x="938.42" y="660.93" width="8.6" height="69.84" fill="#b2df8a" stroke="#fff" stroke-width="0.6"/>
<rect x="938.42" y="658.02" width="8.6" height="2.91" fill="#a6cee3" stroke="#fff" stroke-width="0.6"/>
<rect x="938.42" y="611.46" width="8.6" height="46.56" fill="#1f78b4" stroke="#fff" stroke-width="0.6"/>
<rect x="956.00" y="733.68" width="8.6" height="5.82" fill="#ff7f00" stroke="#fff" stroke-width="0.6"/>
<rect x="956.00" y="631.83" width="8.6" height="101.85" fill="#b2df8a" stroke="#fff" stroke-width="0.6"/>
<rect x="956.00" y="623.10" width="8.6" height="8.73" fill="#a6cee3" stroke="#fff" stroke-width="0.6"/>
<rect x="956.00" y="573.63" width="8.6" height="49.47" fill="#1f78b4" stroke="#fff" stroke-width="0.6"/>
<rect x="973.58" y="733.68" width="8.6" height="5.82" fill="#ff7f00" stroke="#fff" stroke-width="0.6"/>
<rect x="973.58" y="640.56" width="8.6" height="93.12" fill="#b2df8a" stroke="#fff" stroke-width="0.6"/>
<rect x="973.58" y="634.74" width="8.6" height="5.82" fill="#a6cee3" stroke="#fff" stroke-width="0.6"/>
<rect x="973.58" y="599.82" width="8.6" height="34.92" fill="#1f78b4" stroke="#fff" stroke-width="0.6"/>
<rect x="991.16" y="733.68" width="8.6" height="5.82" fill="#ff7f00" stroke="#fff" stroke-width="0.6"/>
<rect x="991.16" y="605.64" width="8.6" height="128.04" fill="#b2df8a" stroke="#fff" stroke-width="0.6"/>
<rect x="991.16" y="588.18" width="8.6" height="17.46" fill="#a6cee3" stroke="#fff" stroke-width="0.6"/>
<rect x="991.16" y="529.98" width="8.6" height="58.20" fill="#1f78b4" stroke="#fff" stroke-width="0.6"/>
<rect x="1008.74" y="733.68" width="8.6" height="5.82" fill="#ff7f00" stroke="#fff" stroke-width="0.6"/>
<rect x="1008.74" y="655.11" width="8.6" height="78.57" fill="#b2df8a" stroke="#fff" stroke-width="0.6"/>
<rect x="1008.74" y="652.20" width="8.6" height="2.91" fill="#a6cee3" stroke="#fff" stroke-width="0.6"/>
<rect x="1008.74" y="611.46" width="8.6" height="40.74" fill="#1f78b4" stroke="#fff" stroke-width="0.6"/>
<rect x="1026.32" y="733.68" width="8.6" height="5.82" fill="#ff7f00" stroke="#fff" stroke-width="0.6"/>
<rect x="1026.32" y="658.02" width="8.6" height="75.66" fill="#b2df8a" stroke="#fff" stroke-width="0.6"/>
<rect x="1026.32" y="599.82" width="8.6" height="58.20" fill="#1f78b4" stroke="#fff" stroke-width="0.6"/>
<rect x="1043.90" y="727.86" width="8.6" height="11.64" fill="#ff7f00" stroke="#fff" stroke-width="0.6"/>
<rect x="1043.90" y="687.12" width="8.6" height="40.74" fill="#b2df8a" stroke="#fff" stroke-width="0.6"/>
<rect x="1043.90" y="675.48" width="8.6" height="11.64" fill="#a6cee3" stroke="#fff" stroke-width="0.6"/>
<rect x="1043.90" y="640.56" width="8.6" height="34.92" fill="#1f78b4" stroke="#fff" stroke-width="0.6"/>
<rect x="1061.48" y="727.86" width="8.6" height="11.64" fill="#ff7f00" stroke="#fff" stroke-width="0.6"/>
<rect x="1061.48" y="646.38" width="8.6" height="81.48" fill="#b2df8a" stroke="#fff" stroke-width="0.6"/>
<rect x="1061.48" y="634.74" width="8.6" height="11.64" fill="#a6cee3" stroke="#fff" stroke-width="0.6"/>
<rect x="1061.48" y="585.27" width="8.6" height="49.47" fill="#1f78b4" stroke="#fff" stroke-width="0.6"/>
<rect x="1079.06" y="724.95" width="8.6" height="14.55" fill="#ff7f00" stroke="#fff" stroke-width="0.6"/>
<rect x="1079.06" y="646.38" width="8.6" height="78.57" fill="#b2df8a" stroke="#fff" stroke-width="0.6"/>
<rect x="1079.06" y="643.47" width="8.6" height="2.91" fill="#a6cee3" stroke="#fff" stroke-width="0.6"/>
<rect x="1079.06" y="620.19" width="8.6" height="23.28" fill="#1f78b4" stroke="#fff" stroke-width="0.6"/>
<rect x="1096.64" y="730.77" width="8.6" height="8.73" fill="#1f78b4" stroke="#fff" stroke-width="0.6"/>
<circle cx="1168.6" cy="442" r="5.9" fill="#1f78b4"/>
<circle cx="1168.6" cy="462" r="5.9" fill="#a6cee3"/>
<circle cx="1168.6" cy="482" r="5.9" fill="#33a02c"/>
<circle cx="1168.6" cy="502" r="5.9" fill="#b2df8a"/>
<circle cx="1168.6" cy="522" r="5.9" fill="#ff7f00"/>
</svg>
<div class="t" style="right:1172px;top:733.84px;font-size:12px;line-height:12px;color:#444;font-family:'Liberation Sans', sans-serif;font-weight:normal;">0</div>
<div class="t" style="right:1172px;top:661.09px;font-size:12px;line-height:12px;color:#444;font-family:'Liberation Sans', sans-serif;font-weight:normal;">25</div>
<div class="t" style="right:1172px;top:588.34px;font-size:12px;line-height:12px;color:#444;font-family:'Liberation Sans', sans-serif;font-weight:normal;">50</div>
<div class="t" style="right:1172px;top:515.59px;font-size:12px;line-height:12px;color:#444;font-family:'Liberation Sans', sans-serif;font-weight:normal;">75</div>
<div class="t" style="right:1172px;top:442.84px;font-size:12px;line-height:12px;color:#444;font-family:'Liberation Sans', sans-serif;font-weight:normal;">100</div>
<div class="t" style="left:-227.5px;width:600px;text-align:center;top:748.84px;font-size:12px;line-height:12px;color:#333;font-family:'Liberation Sans', sans-serif;font-weight:normal;">06:40 AM</div>
<div class="t" style="left:-51.69999999999999px;width:600px;text-align:center;top:748.84px;font-size:12px;line-height:12px;color:#333;font-family:'Liberation Sans', sans-serif;font-weight:normal;">06:50 AM</div>
<div class="t" style="left:124.10000000000002px;width:600px;text-align:center;top:748.84px;font-size:12px;line-height:12px;color:#333;font-family:'Liberation Sans', sans-serif;font-weight:normal;">07:00 AM</div>
<div class="t" style="left:299.9000000000001px;width:600px;text-align:center;top:748.84px;font-size:12px;line-height:12px;color:#333;font-family:'Liberation Sans', sans-serif;font-weight:normal;">07:10 AM</div>
<div class="t" style="left:475.70000000000005px;width:600px;text-align:center;top:748.84px;font-size:12px;line-height:12px;color:#333;font-family:'Liberation Sans', sans-serif;font-weight:normal;">07:20 AM</div>
<div class="t" style="left:651.5px;width:600px;text-align:center;top:748.84px;font-size:12px;line-height:12px;color:#333;font-family:'Liberation Sans', sans-serif;font-weight:normal;">07:30 AM</div>
<div class="t" style="left:1179px;top:436.84px;font-size:12px;line-height:12px;color:#333;font-family:'Liberation Sans', sans-serif;font-weight:normal;">400</div>
<div class="t" style="left:1179px;top:456.84px;font-size:12px;line-height:12px;color:#333;font-family:'Liberation Sans', sans-serif;font-weight:normal;">401</div>
<div class="t" style="left:1179px;top:476.84px;font-size:12px;line-height:12px;color:#333;font-family:'Liberation Sans', sans-serif;font-weight:normal;">403</div>
<div class="t" style="left:1179px;top:496.84px;font-size:12px;line-height:12px;color:#333;font-family:'Liberation Sans', sans-serif;font-weight:normal;">404</div>
<div class="t" style="left:1179px;top:516.84px;font-size:12px;line-height:12px;color:#333;font-family:'Liberation Sans', sans-serif;font-weight:normal;">429</div>

</body></html>
